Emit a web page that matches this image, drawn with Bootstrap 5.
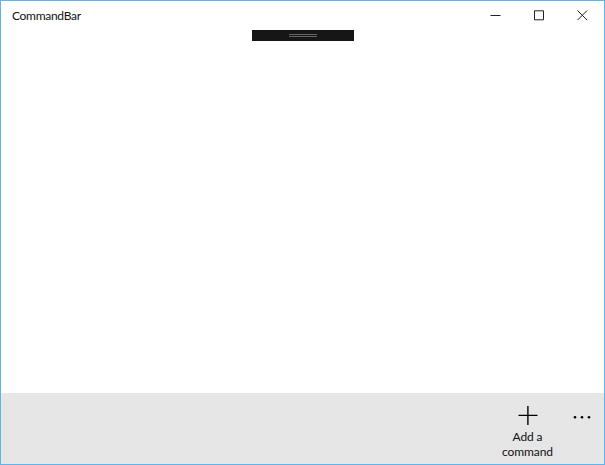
<!DOCTYPE html>
<html lang="en">
  <head>
    <meta charset="UTF-8" />
    <meta name="viewport" content="width=device-width, initial-scale=1.0" />
    <title>CommandBar</title>
    <link href="https://cdn.jsdelivr.net/npm/bootstrap@5.3.3/dist/css/bootstrap.min.css" rel="stylesheet" />
    <style>
      body {
        font-family: Lato, "Open Sans", sans-serif;
        font-size: 12px;
        color: #111;
      }
      .app-window {
        border: 1px solid #5cb5ee;
      }
      .title-bar {
        height: 29px;
        padding-left: 11px;
      }
      .window-title {
        letter-spacing: -0.3px;
      }
      .caption-btn {
        width: 43.5px;
        height: 29px;
      }
      .debug-handle {
        width: 102px;
        height: 11px;
        background-color: #161616;
      }
      .command-bar {
        height: 71px;
        background-color: #e6e6e6;
      }
      .command-btn {
        width: 65px;
        padding-top: 12px;
        line-height: 15px;
        color: #111;
      }
      .command-label {
        font-size: 12px;
        letter-spacing: -0.1px;
        margin-top: 4px;
      }
      .more-btn {
        width: 44px;
        padding-top: 22px;
      }
    </style>
  </head>
  <body>
    <div class="app-window d-flex flex-column vh-100 bg-white">
      <header class="title-bar d-flex align-items-center flex-shrink-0">
        <span class="window-title me-auto">CommandBar</span>
        <button class="caption-btn btn p-0 border-0 rounded-0 d-flex align-items-center justify-content-center" aria-label="Minimize">
          <svg width="11" height="11" fill="none" stroke="#222"><path d="M0.5 5.5h10" /></svg>
        </button>
        <button class="caption-btn btn p-0 border-0 rounded-0 d-flex align-items-center justify-content-center" aria-label="Maximize">
          <svg width="11" height="11" fill="none" stroke="#222"><path d="M1.5 0.8h9v9h-9z" /></svg>
        </button>
        <button class="caption-btn btn p-0 border-0 rounded-0 d-flex align-items-center justify-content-center" aria-label="Close">
          <svg width="11" height="11" fill="none" stroke="#222"><path d="M0.5 0.5l9.6 9.6M10.1 0.5l-9.6 9.6" /></svg>
        </button>
      </header>

      <main class="flex-grow-1">
        <div class="debug-handle mx-auto d-flex align-items-center justify-content-center">
          <svg width="28" height="3" stroke="#666"><path d="M0 0.5h28M0 2.5h28" /></svg>
        </div>
      </main>

      <footer class="command-bar d-flex justify-content-end align-items-start flex-shrink-0">
        <button class="command-btn btn border-0 rounded-0 px-0 pb-0 d-flex flex-column align-items-center">
          <svg width="20" height="20" fill="none" stroke="#000" stroke-width="1.4"><path d="M0.5 10.4h19M9.9 1v19" /></svg>
          <span class="command-label">Add a<br />command</span>
        </button>
        <button class="more-btn btn border-0 rounded-0 px-0 pb-0 d-flex justify-content-center" aria-label="More">
          <svg width="18" height="4"><circle cx="2" cy="2.2" r="1.3" /><circle cx="9" cy="2.2" r="1.3" /><circle cx="16" cy="2.2" r="1.3" /></svg>
        </button>
      </footer>
    </div>
    <script src="https://cdn.jsdelivr.net/npm/bootstrap@5.3.3/dist/js/bootstrap.bundle.min.js"></script>
  </body>
</html>
